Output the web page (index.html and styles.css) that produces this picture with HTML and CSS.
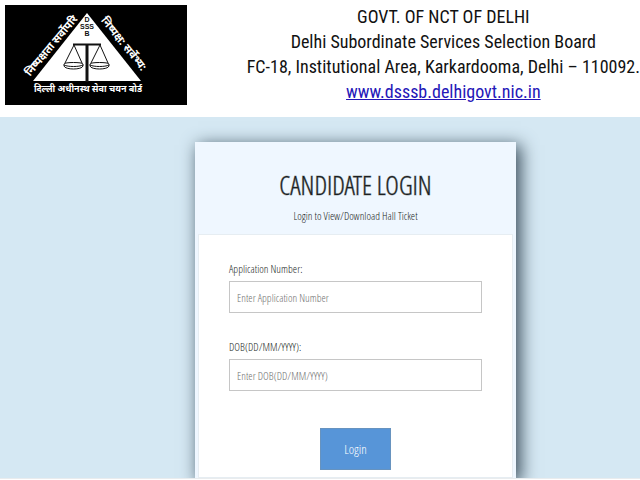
FILE: index.html
```html
<!DOCTYPE html>
<html lang="en">
<head>
<meta charset="utf-8">
<meta name="viewport" content="width=device-width, initial-scale=1">
<title>DSSSB Candidate Login</title>
<link rel="stylesheet" href="styles.css">
</head>
<body>
<header class="masthead">
  <svg class="logo" viewBox="0 0 182 100" role="img" aria-label="DSSSB emblem">
    <rect width="182" height="100" fill="#000"/>
    <path d="M82 8 28 76H136Z" fill="#fff"/>
    <g class="initials" text-anchor="middle">
      <text x="82" y="17">D</text>
      <text x="82" y="24">SSS</text>
      <text x="82" y="31">B</text>
    </g>
    <g fill="none" stroke="#111">
      <path d="M82 39V77" stroke-width="3"/>
      <path d="M68 39.5H96" stroke-width="2"/>
      <path d="M69 40 60 58M69 40 77 58M95 40 86 58M95 40 103 58" stroke-width="1"/>
      <path d="M59 59c0-2 19-2 19 0v2c-1 4-18 4-19 0ZM85 59c0-2 19-2 19 0v2c-1 4-18 4-19 0Z" stroke-width="1"/>
      <path d="M59 60c4 2 15 2 19 0M85 60c4 2 15 2 19 0" stroke-width="1"/>
    </g>
    <g class="motto" lang="hi" text-anchor="middle">
      <text transform="translate(49 43) rotate(-50)">निष्पक्षता सर्वोपरि</text>
      <text transform="translate(116 41) rotate(51)">निष्पक्ष: सर्वेभ्य:</text>
      <text class="board" x="83" y="87">दिल्ली अधीनस्थ सेवा चयन बोर्ड</text>
    </g>
  </svg>
  <div class="office">
    <p>GOVT. OF NCT OF DELHI</p>
    <p>Delhi Subordinate Services Selection Board</p>
    <p>FC-18, Institutional Area, Karkardooma, Delhi – 110092.</p>
    <p><a href="#">www.dsssb.delhigovt.nic.in</a></p>
  </div>
</header>
<main class="page">
  <section class="card">
    <div class="card-head">
      <h1>CANDIDATE LOGIN</h1>
      <p>Login to View/Download Hall Ticket</p>
    </div>
    <form class="card-body">
      <div class="field">
        <label for="application">Application Number:</label>
        <input id="application" type="text" placeholder="Enter Application Number">
      </div>
      <div class="field">
        <label for="dob">DOB(DD/MM/YYYY):</label>
        <input id="dob" type="text" placeholder="Enter DOB(DD/MM/YYYY)">
      </div>
      <button class="login" type="button">Login</button>
    </form>
  </section>
</main>
</body>
</html>
```
FILE: styles.css
```css
* {
  box-sizing: border-box;
}

body {
  margin: 0;
  min-height: 100vh;
  display: flex;
  flex-direction: column;
  background: #fff;
  color: #1b1f23;
  font-family: "Open Sans Condensed Light", "Roboto Condensed", "Open Sans", sans-serif;
}

p,
h1 {
  margin: 0;
}

.masthead {
  display: flex;
  justify-content: space-between;
  padding: 4px 0 12px 5px;
}

.logo {
  width: 182px;
  flex: none;
  margin-top: 1px;
}

.initials {
  font: bold 7px "Liberation Sans", sans-serif;
  fill: #111;
}

.motto {
  font: bold 11px "Noto Sans", sans-serif;
  fill: #fff;
}

.motto .board {
  font-size: 9px;
}

.office {
  color: #111;
  font: 18px/25px "Roboto Condensed", "Arial Narrow", "Liberation Sans", sans-serif;
  text-align: center;
  white-space: nowrap;
}

.office a {
  color: #2416b8;
}

.page {
  flex: 1;
  padding: 25px 0 0 71px;
  background: #d5e8f3;
  border-bottom: 1px solid #e9ecee;
  margin-bottom: 2px;
  overflow: hidden;
}

.card {
  width: 321px;
  max-width: 100%;
  margin: 0 auto;
  padding: 0 3px;
  background: #eff7ff;
  box-shadow: 4px 4px 16px 1px #3f5260;
}

.card-head {
  padding: 27px 0 10px;
  text-align: center;
}

.card-head h1 {
  font-size: 26px;
  font-weight: 400;
  line-height: 33px;
  -webkit-text-stroke: 1px rgba(27, 31, 35, 0.4);
}

.card-head p {
  margin-top: 6px;
  font-size: 11px;
  line-height: 16px;
}

.card-body {
  padding: 26px 30px 7px;
  background: #fff;
  border: 1px solid #e6edf2;
}

.field {
  display: flex;
  flex-direction: column;
  margin-bottom: 26px;
}

.field label {
  margin-bottom: 4px;
  font-size: 11px;
  line-height: 16px;
}

.field input {
  height: 32px;
  padding: 0 7px;
  border: 1px solid #c6c6c6;
  font: inherit;
  font-size: 11px;
}

.field input::placeholder {
  color: #707070;
}

.login {
  display: block;
  width: 71px;
  height: 42px;
  margin: 37px auto 0;
  border: 1px solid #6793bf;
  background: #5795d8;
  color: #fff;
  font: inherit;
  font-size: 13px;
}
```
